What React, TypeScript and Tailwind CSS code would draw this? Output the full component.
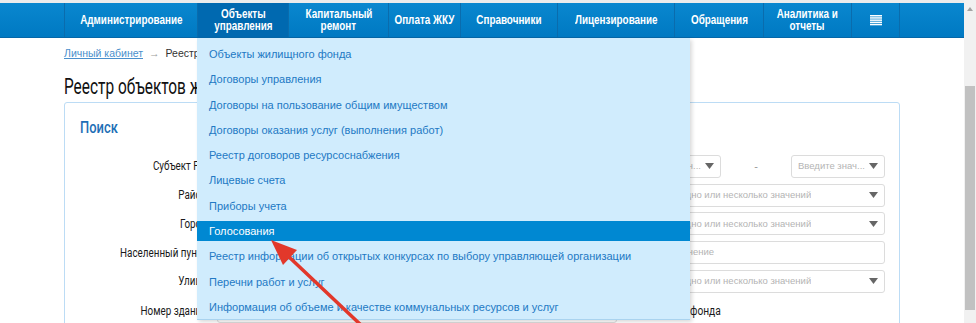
import React from "react"

const navItems = [
  { label: ["Администрирование"], w: "w-[133px]" },
  { label: ["Объекты", "управления"], w: "w-[91px]", active: true },
  { label: ["Капитальный", "ремонт"], w: "w-[100px]" },
  { label: ["Оплата ЖКУ"], w: "w-[72px]" },
  { label: ["Справочники"], w: "w-[97px]" },
  { label: ["Лицензирование"], w: "w-[117px]" },
  { label: ["Обращения"], w: "w-[89px]" },
  { label: ["Аналитика и", "отчеты"], w: "w-[88px]" },
]

const menuItems = [
  "Объекты жилищного фонда",
  "Договоры управления",
  "Договоры на пользование общим имуществом",
  "Договоры оказания услуг (выполнения работ)",
  "Реестр договоров ресурсоснабжения",
  "Лицевые счета",
  "Приборы учета",
  "Голосования",
  "Реестр информации об открытых конкурсах по выбору управляющей организации",
  "Перечни работ и услуг",
  "Информация об объеме и качестве коммунальных ресурсов и услуг",
]

const Caret = () => (
  <svg width="9" height="6" viewBox="0 0 9 6" className="shrink-0">
    <path d="M0 0h9L4.5 6z" fill="#666" />
  </svg>
)

const Select = ({ text, className = "" }: { text: string; className?: string }) => (
  <div
    className={`flex h-[23px] items-center justify-between gap-[4px] rounded-[3px] border border-[#dcdcdc] bg-white pl-[6px] pr-[6px] ${className}`}
  >
    <span className="overflow-hidden whitespace-nowrap text-[9.5px] text-[#b4b4b4]">{text}</span>
    <Caret />
  </div>
)

const Input = ({ text, className = "" }: { text: string; className?: string }) => (
  <div
    className={`flex h-[23px] items-center rounded-[3px] border border-[#dcdcdc] bg-white pl-[6px] text-[9.5px] text-[#b4b4b4] ${className}`}
  >
    {text}
  </div>
)

const Label = ({ children }: { children: React.ReactNode }) => (
  <div className="w-[142px] shrink-0 text-right text-[12px] leading-[14px]">
    <span className="inline-block origin-right scale-x-[0.82] whitespace-nowrap font-['Roboto',sans-serif] text-[#1a1a1a]">
      {children}
    </span>
  </div>
)

const Row = ({ label, left, right, className = "" }: { label: string; left: React.ReactNode; right: React.ReactNode; className?: string }) => (
  <div className={`flex items-center gap-[10px] ${className}`}>
    <Label>{label}</Label>
    <div className="w-[400px] shrink-0">{left}</div>
    <div className="w-[258px] shrink-0">{right}</div>
  </div>
)

export default function App() {
  return (
    <div className="flex h-[323px] w-[976px] overflow-hidden bg-white font-['Liberation_Sans',Arial,sans-serif]">
      <div className="relative flex min-w-0 flex-1 flex-col">
        <div className="h-[3px] shrink-0 bg-[#ececec]" />

        {/* Top navigation */}
        <nav className="flex h-[35px] shrink-0 border-b border-[#0567a8] bg-gradient-to-b from-[#0a87cf] to-[#0079c2] text-white">
          <div className="w-[64px] shrink-0" />
          {navItems.map((item, i) => (
            <div
              key={i}
              className={`flex ${item.w} shrink-0 flex-col items-center justify-center border-l border-[#0a6cad] ${
                item.active ? "bg-[#0069b0]" : ""
              }`}
            >
              {item.label.map((l) => (
                <span
                  key={l}
                  className="inline-block scale-x-[0.76] whitespace-nowrap text-[13px] font-bold leading-[12px]"
                >
                  {l}
                </span>
              ))}
            </div>
          ))}
          <div className="flex w-[48px] shrink-0 items-center justify-center border-l border-[#0a6cad]">
            <svg width="12" height="11" viewBox="0 0 12 11">
              {[0, 2.2, 4.4, 6.6, 8.8].map((y) => (
                <rect key={y} x="0" y={y} width="12" height="1.5" fill="#fff" />
              ))}
            </svg>
          </div>
          <div className="flex-1 border-l border-[#0a6cad]" />
        </nav>

        {/* Page content */}
        <main className="shrink-0 pl-[64px] pr-[64px]">
          <div className="mt-[8px] flex items-center gap-[6px] text-[10.5px]">
            <a className="text-[#4a8fcc] underline">Личный кабинет</a>
            <span className="text-[#999]">→</span>
            <span className="text-[#333]">Реестр объектов жилищного фонда</span>
          </div>
          <h1 className="mt-[12px] h-[26px] leading-[26px]">
            <span className="inline-block origin-left scale-x-[0.7] whitespace-nowrap font-['Roboto',sans-serif] text-[22px] text-[#111]">
              Реестр объектов жилищного фонда
            </span>
          </h1>

          <div className="mt-[2px] h-[240px] rounded-t-[3px] border border-[#bcdcf5] pl-[15px] pr-[15px] pt-[14px]">
            <div className="h-[20px] leading-[20px]">
              <span className="inline-block origin-left scale-x-[0.76] font-['Roboto',sans-serif] text-[17px] font-medium text-[#1e6fb6]">
                Поиск
              </span>
            </div>

            <div className="ml-[-15px] mt-[18px] flex flex-col gap-[5.75px]">
              <Row
                label="Субъект РФ"
                left={<Select text="Выберите значение" />}
                right={
                  <div className="flex items-center">
                    <Select text="Введите знач..." className="w-[94px]" />
                    <span className="flex-1 text-center text-[11px] text-[#999]">-</span>
                    <Select text="Введите знач..." className="w-[94px]" />
                  </div>
                }
              />
              <Row
                label="Район"
                left={<Select text="Выберите одно или несколько значений" />}
                right={<Select text="Выберите одно или несколько значений" />}
              />
              <Row
                label="Город"
                left={<Select text="Выберите одно или несколько значений" />}
                right={<Select text="Выберите одно или несколько значений" />}
              />
              <Row label="Населенный пункт" left={<Input text="Введите значение" />} right={<Input text="Введите значение" />} />
              <Row
                label="Улица"
                left={<Select text="Выберите одно или несколько значений" />}
                right={<Select text="Выберите одно или несколько значений" />}
              />
              <Row
                label="Номер здания"
                className="mt-[1px]"
                left={<Input text="Введите значение" />}
                right={
                  <div className="flex h-[14px] items-center font-['Roboto',sans-serif] text-[12px] text-[#1a1a1a]">
                    <div className="flex w-[60px] shrink-0 justify-end whitespace-nowrap">
                      <span className="inline-block origin-right scale-x-[0.85]">Вид жилищного</span>
                    </div>
                    <span className="ml-[3px] inline-block origin-left scale-x-[0.85]">фонда</span>
                  </div>
                }
              />
            </div>
          </div>
        </main>

        {/* Dropdown menu */}
        <div className="absolute left-[197px] top-[38px] flex h-[282px] w-[493px] flex-col gap-[5.3px] border-b border-[#a9d3ef] bg-[#d0ecfd] pt-[6px] shadow-[2px_2px_4px_rgba(0,0,0,0.15)]">
          {menuItems.map((m) => (
            <div
              key={m}
              className={`h-[20px] whitespace-nowrap px-[12px] text-[11px] leading-[20px] ${
                m === "Голосования" ? "bg-[#0088d2] text-white" : "text-[#2279c4]"
              }`}
            >
              {m}
            </div>
          ))}
        </div>

        {/* Red annotation arrow */}
        <svg className="pointer-events-none absolute left-0 top-0" width="964" height="323">
          <line x1="288" y1="256" x2="362" y2="326" stroke="#e2382b" strokeWidth="3.5" strokeLinecap="round" />
          <polygon points="271,240 297,250 283,265" fill="#e2382b" />
        </svg>
      </div>

      {/* Scrollbar */}
      <div className="relative w-[12px] shrink-0 bg-[#f1f1f1]">
        <svg className="absolute left-[3px] top-[7px]" width="6" height="4" viewBox="0 0 6 4">
          <path d="M0 4L3 0l3 4z" fill="#a3a3a3" />
        </svg>
        <div className="absolute left-[1px] top-[86px] h-[224px] w-[10px] bg-[#c1c1c1]" />
      </div>
    </div>
  )
}
